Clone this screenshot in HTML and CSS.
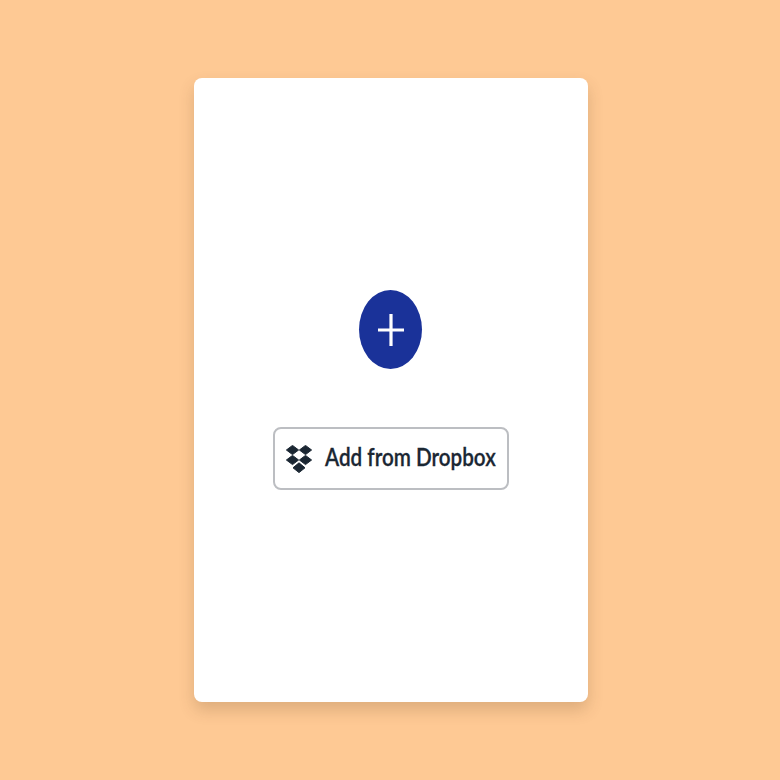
FILE: index.html
```html
<!DOCTYPE html>
<html lang="en">

<head>
    <meta charset="UTF-8">
    <meta name="viewport" content="width=device-width, initial-scale=1.0">
    <title>Add from Dropbox</title>
    <link rel="stylesheet" href="styles.css">
</head>

<body>
    <div class="card">
        <button class="add-btn" aria-label="Add">
            <svg class="plus" viewBox="0 0 26 32" width="26" height="32">
                <path d="M13 0V32M0 16H26" fill="none" stroke="#fff" stroke-width="3.2" />
            </svg>
        </button>

        <button class="dropbox-btn">
            <svg class="dropbox-icon" viewBox="0 0 26 28" width="26" height="28">
                <path d="M6.5 0.4L12.6 5L6.5 9.6L0.4 5Z" />
                <path d="M19.5 0.4L25.6 5L19.5 9.6L13.4 5Z" />
                <path d="M6.5 10.4L12.6 15L6.5 19.6L0.4 15Z" />
                <path d="M19.5 10.4L25.6 15L19.5 19.6L13.4 15Z" />
                <path d="M13 17.8L19 22.8L13 27.6L7 22.8Z" />
            </svg>
            <span class="label">Add from Dropbox</span>
        </button>
    </div>
</body>

</html>
```

FILE: styles.css
```css
* {
    box-sizing: border-box;
}

body {
    margin: 0;
    height: 780px;
    padding-left: 2px;
    display: flex;
    align-items: center;
    justify-content: center;
    background-color: #fec994;
    font-family: Lato, "Open Sans", sans-serif;
}

.card {
    width: 394px;
    height: 624px;
    display: flex;
    flex-direction: column;
    align-items: center;
    justify-content: center;
    gap: 58px;
    background-color: #fff;
    border-radius: 8px;
    box-shadow: 0 8px 16px rgba(90, 60, 30, 0.2);
}

.add-btn {
    width: 63px;
    height: 79px;
    margin-right: 1px;
    padding: 0;
    border: none;
    border-radius: 50%;
    display: flex;
    align-items: center;
    justify-content: center;
    background-color: #1a3299;
}

.dropbox-btn {
    width: 236px;
    height: 63px;
    padding: 0 0 0 11px;
    display: flex;
    align-items: center;
    gap: 13px;
    background-color: #fff;
    border: 2px solid #bcbec2;
    border-radius: 8px;
    color: #1b2733;
    font-family: inherit;
    font-size: 24px;
    font-weight: 600;
}

.dropbox-icon {
    fill: #1b2733;
    stroke: #1b2733;
    stroke-width: 1;
    stroke-linejoin: round;
    flex-shrink: 0;
}

/* the reference face is narrower than Lato */
.label {
    padding-bottom: 4px;
    white-space: nowrap;
    -webkit-text-stroke: 0.3px #1b2733;
    transform: scaleX(0.86);
    transform-origin: left center;
}
```
